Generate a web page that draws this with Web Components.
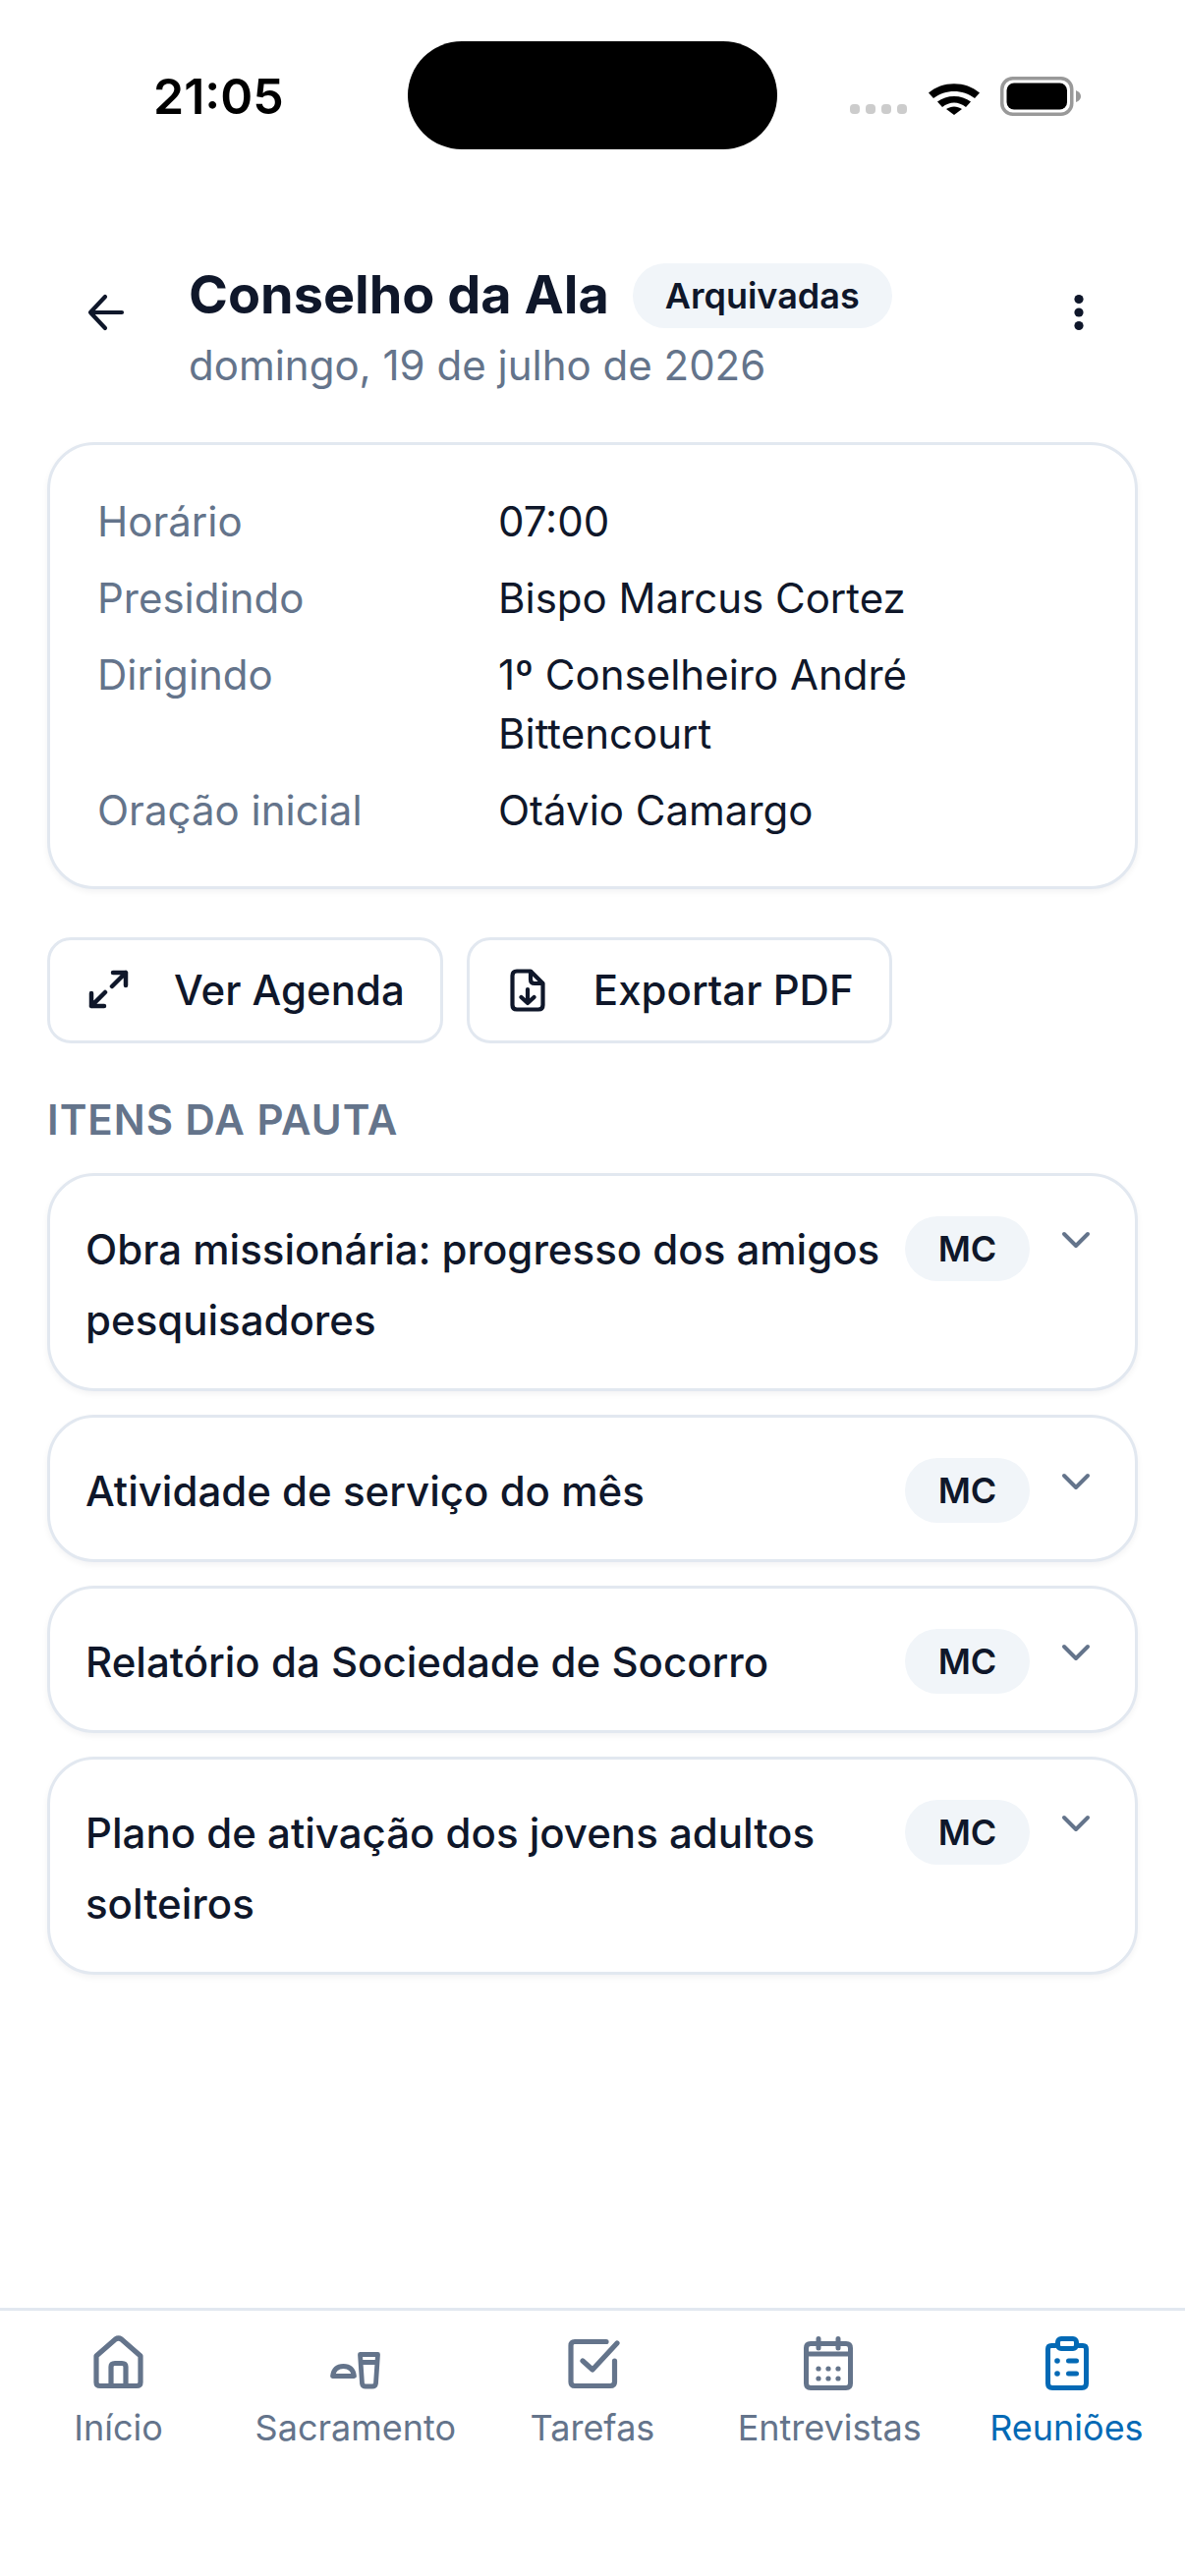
<!DOCTYPE html>
<html lang="pt"><head><meta charset="utf-8"><title>Conselho da Ala</title>
<style>
html,body{margin:0;padding:0;background:#fff}
body{width:1206px;height:2622px;overflow:hidden;font-family:Inter,"Noto Sans",sans-serif;color:#0f172a}
</style></head><body>
<app-screen>
  <status-bar slot="status"></status-bar>
  <page-header slot="header" title="Conselho da Ala" chip="Arquivadas" sub="domingo, 19 de julho de 2026"></page-header>
  <info-card slot="main">
    <info-row label="Horário">07:00</info-row>
    <info-row label="Presidindo">Bispo Marcus Cortez</info-row>
    <info-row label="Dirigindo">1º Conselheiro André Bittencourt</info-row>
    <info-row label="Oração inicial">Otávio Camargo</info-row>
  </info-card>
  <action-bar slot="main">
    <action-button label="Ver Agenda"><svg viewBox="0 0 60 60" fill="none" stroke="currentColor" stroke-width="4.500" stroke-linecap="round" stroke-linejoin="round"><path d="M34 12H47V25M47 12 33 26M25 46H12V33M12 46 26 32"/></svg></action-button>
    <action-button label="Exportar PDF"><svg viewBox="0 0 60 60" fill="none" stroke="currentColor" stroke-width="4.200" stroke-linecap="round" stroke-linejoin="round"><path d="M32 10.500H18Q13.500 10.500 13.500 15V45Q13.500 49.500 18 49.500H40Q44.500 49.500 44.500 45V23L32 10.500Z"/><path d="M32 11V19Q32 23 36 23H44"/><path d="M29 29V43M22.500 37 29 43 35.500 37"/></svg></action-button>
  </action-bar>
  <section-title slot="main">ITENS DA PAUTA</section-title>
  <agenda-list slot="main">
    <agenda-item owner="MC">Obra missionária: progresso dos amigos pesquisadores</agenda-item>
    <agenda-item owner="MC">Atividade de serviço do mês</agenda-item>
    <agenda-item owner="MC">Relatório da Sociedade de Socorro</agenda-item>
    <agenda-item owner="MC">Plano de ativação dos jovens adultos solteiros</agenda-item>
  </agenda-list>
  <tab-bar slot="nav">
    <tab-item label="Início"><svg viewBox="0 0 72 72" fill="none" stroke="currentColor" stroke-width="5.200" stroke-linecap="round" stroke-linejoin="round"><path d="M13 28 32.500 11Q35.500 9 38.500 11L58 28V55Q58 58.500 54 58.500H17Q13 58.500 13 55Z"/><path d="M28 58.500V39Q28 35.500 32 35.500H39Q43 35.500 43 39V58.500"/></svg></tab-item>
    <tab-item label="Sacramento"><svg viewBox="0 0 72 72" fill="none" stroke="currentColor" stroke-width="4.800" stroke-linecap="round" stroke-linejoin="round"><path d="M12.500 48.500Q14 38.500 23.500 38.500Q33 38.500 34.500 48.500Z"/><path d="M40.500 26.500H58.500L56.500 56Q56 59 53 59H46Q43 59 42.500 56ZM41 34.500H58"/></svg></tab-item>
    <tab-item label="Tarefas"><svg viewBox="0 0 72 72" fill="none" stroke="currentColor" stroke-width="5.200" stroke-linecap="round" stroke-linejoin="round"><path d="M50 13.500H18Q14 13.500 14 17.500V54.500Q14 58.500 18 58.500H54Q58.500 58.500 58.500 54.500V33"/><path d="M26 33 36 42 61 15"/></svg></tab-item>
    <tab-item label="Entrevistas"><svg viewBox="0 0 72 72" fill="none" stroke="currentColor" stroke-width="5" stroke-linecap="round" stroke-linejoin="round"><path d="M17 15.500H53Q57.500 15.500 57.500 20V56Q57.500 60.500 53 60.500H17Q12.500 60.500 12.500 56V20Q12.500 15.500 17 15.500ZM12.500 26H57.500M25 10.500V20M45 10.500V20"/><g fill="currentColor" stroke="none"><circle cx="25" cy="41" r="2.600"/><circle cx="35" cy="41" r="2.600"/><circle cx="45" cy="41" r="2.600"/><circle cx="25" cy="51" r="2.600"/><circle cx="35" cy="51" r="2.600"/><circle cx="45" cy="51" r="2.600"/></g></svg></tab-item>
    <tab-item label="Reuniões" active><svg viewBox="0 0 72 72" fill="none" stroke="currentColor" stroke-width="5" stroke-linecap="round" stroke-linejoin="round"><path d="M25 17.500H21Q17.500 17.500 17.500 21V56Q17.500 60.500 22 60.500H52Q56.500 60.500 56.500 56V21Q56.500 17.500 53 17.500H49"/><rect x="27.500" y="10.500" width="19" height="10" rx="3.500"/><path d="M38.500 33H46.500M38.500 46H46.500"/><g fill="currentColor" stroke="none"><circle cx="27" cy="33" r="2.800"/><circle cx="27" cy="46" r="2.800"/></g></svg></tab-item>
  </tab-bar>
</app-screen>
<script>
const def=(name,css,html)=>customElements.define(name,class extends HTMLElement{
  connectedCallback(){ if(this.shadowRoot) return;
    const r=this.attachShadow({mode:'open'});
    r.innerHTML=`<style>${css}</style>`+(typeof html==='function'?html(this):html);
  }
});
const attr=(e,n)=>e.getAttribute(n)||'';
def('app-screen',`:host{display:flex;flex-direction:column;width:1206px;height:2622px;box-sizing:border-box}
  main{flex:1;display:flex;flex-direction:column;padding:0 48px;min-height:0}`,
  `<slot name="status"></slot><slot name="header"></slot><main><slot name="main"></slot></main><slot name="nav"></slot>`);
def('status-bar',`:host{display:flex;align-items:flex-start;height:262px;box-sizing:border-box;padding:42px 0 0 156px;flex:none}
  .time{font:600 50px/1 Inter,sans-serif;color:#000;width:259px;margin-top:31px;letter-spacing:0}
  .island{width:376px;height:110px;border-radius:55px;background:#000;flex:none}
  .sig{display:flex;gap:6px;margin:64px 0 0 74px}
  .sig i{width:10px;height:10px;border-radius:4px;background:#ccc}
  .wifi{width:52px;height:38px;margin:37px 0 0 22px;flex:none}
  .bat{width:84px;height:40px;margin:36px 0 0 21px;flex:none}`,
  `<div class="time">21:05</div><div class="island"></div><div class="sig"><i></i><i></i><i></i><i></i></div>
  <svg class="wifi" viewBox="0 0 52 38"><path d="M0 15.500C14 3 38 3 52 15.500L47 21C35 11.500 17 11.500 5 21Z"/><path d="M9 24.500C18 17 34 17 43 24.500L38 30C30.500 24 21.500 24 14 30Z" /><path d="M18 32C23 28.500 29 28.500 34 32L26 38Z"/></svg>
  <svg class="bat" viewBox="0 0 84 40"><rect x="1.750" y="1.750" width="71" height="36.500" rx="11" fill="none" stroke="#999" stroke-width="3.500"/><rect x="6.500" y="6.500" width="61.500" height="27" rx="7.500"/><path d="M77 14Q82 16 82 20Q82 24 77 26Z" fill="#999"/></svg>`);
def('page-header',`:host{display:flex;align-items:flex-start;height:189px;box-sizing:border-box;padding:0 81px 0 81px;flex:none}
  .back{width:54px;height:54px;margin:29px 57px 0 0;color:#0f172a;flex:none}
  .col{flex:1;min-width:0}
  .top{display:flex;align-items:flex-start;gap:24px;height:66px;margin-top:5px}
  h1{margin:0;font:700 54px/66px Inter,sans-serif;color:#0f172a}
  .chip{height:66px;margin-top:1px;box-sizing:border-box;display:flex;align-items:center;padding:0 33px;border-radius:33px;background:#f1f5f9;font:600 36px/1 Inter,sans-serif;color:#0f172a}
  .sub{font:400 42px/60px Inter,sans-serif;color:#64748b;margin-top:9px}
  .more{width:54px;height:54px;margin-top:29px;flex:none}`,
  e=>`<svg class="back" viewBox="0 0 54 54" fill="none" stroke="currentColor" stroke-width="4.200" stroke-linecap="round" stroke-linejoin="round"><path d="M43 27H11M26 11 11 27 26 43"/></svg>
  <div class="col"><div class="top"><h1>${attr(e,'title')}</h1><span class="chip">${attr(e,'chip')}</span></div><div class="sub">${attr(e,'sub')}</div></div>
  <svg class="more" viewBox="0 0 54 54" fill="#0f172a"><circle cx="27" cy="13.500" r="4.600"/><circle cx="27" cy="27" r="4.600"/><circle cx="27" cy="40.500" r="4.600"/></svg>`);
def('info-card',`:host{display:flex;flex-direction:column;gap:18px;box-sizing:border-box;height:455px;padding:48px 48px 44px;margin-top:-1px;border:3px solid #e2e8f0;border-radius:48px;background:#fff;box-shadow:0 3px 6px rgba(15,23,42,.05);flex:none}`,`<slot></slot>`);
def('info-row',`:host{display:grid;grid-template-columns:408px 1fr;font:400 42px/60px Inter,sans-serif;color:#0f172a}
  .l{color:#64748b}`,e=>`<div class="l">${attr(e,'label')}</div><div><slot></slot></div>`);
def('action-bar',`:host{display:flex;gap:24px;margin-top:49px;flex:none}`,`<slot></slot>`);
def('action-button',`:host{display:flex;align-items:center;gap:36px;box-sizing:border-box;height:108px;padding:0 36px 0 30px;border:3px solid #e2e8f0;border-radius:24px;background:#fff;font:500 42px/60px Inter,sans-serif;color:#0f172a}
  ::slotted(svg){width:60px;height:60px;flex:none}`,e=>`<slot></slot><span>${attr(e,'label')}</span>`);
def('section-title',`:host{display:block;margin-top:48px;font:600 42px/60px Inter,sans-serif;letter-spacing:1px;color:#64748b;flex:none}`,`<slot></slot>`);
def('agenda-list',`:host{display:flex;flex-direction:column;gap:24px;margin-top:24px;flex:none}`,`<slot></slot>`);
def('agenda-item',`:host{display:flex;align-items:flex-start;box-sizing:border-box;padding:39px 36px 33px;border:3px solid #e2e8f0;border-radius:48px;background:#fff;box-shadow:0 3px 6px rgba(15,23,42,.05)}
  .t{flex:1;min-width:0;font:500 42px/72px Inter,sans-serif;color:#0f172a}
  .chip{height:66px;width:127px;display:flex;align-items:center;justify-content:center;border-radius:33px;background:#f1f5f9;font:600 36px/1 Inter,sans-serif;margin:2px 0 0 23px;flex:none}
  svg{width:48px;height:48px;margin:2px 0 0 23px;flex:none;color:#64748b}`,
  e=>`<div class="t"><slot></slot></div><span class="chip">${attr(e,'owner')}</span><svg viewBox="0 0 48 48" fill="none" stroke="currentColor" stroke-width="4" stroke-linecap="round" stroke-linejoin="round"><path d="M12 18 24 30 36 18"/></svg>`);
def('tab-bar',`:host{display:grid;grid-template-columns:repeat(5,1fr);box-sizing:border-box;height:273px;padding-top:18px;border-top:3px solid #e2e8f0;background:#fff;flex:none}`,`<slot></slot>`);
def('tab-item',`:host{display:flex;flex-direction:column;align-items:center;color:#64748b;font:400 36px/48px Inter,sans-serif}
  :host([active]){color:#0369b5}
  ::slotted(svg){width:72px;height:72px;flex:none;margin-bottom:5px}
  span{white-space:nowrap}`,e=>`<slot></slot><span>${attr(e,'label')}</span>`);
</script>
</body></html>
